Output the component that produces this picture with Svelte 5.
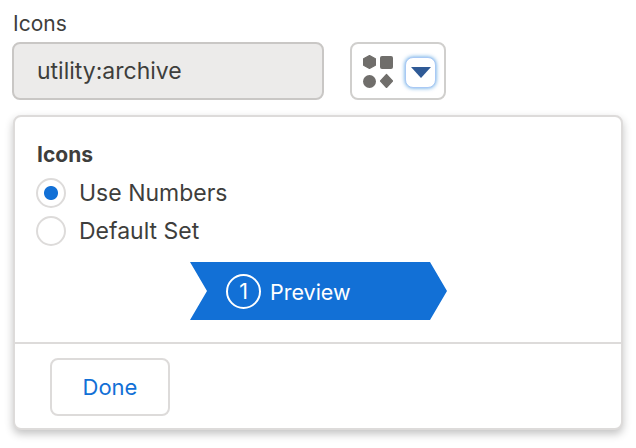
<script>
    let iconSet = "numbers";
</script>

<div class="page">
    <div class="label">Icons</div>
    <div class="row">
        <div class="input">utility:archive</div>
        <div class="picker">
            <svg width="30" height="33" viewBox="0 0 30 33">
                <path d="M6.5 0.6 L12.4 3.8 V10.2 L6.5 13.4 L0.6 10.2 V3.8 Z" fill="#706e6b" stroke="#706e6b" stroke-width="1.2" stroke-linejoin="round" />
                <rect x="17" y="1" width="13" height="13" rx="2" fill="#706e6b" />
                <circle cx="6.5" cy="26.5" r="6.5" fill="#706e6b" />
                <path d="M23.5 19.5 L29.5 26 L23.5 32.5 L17.5 26 Z" fill="#706e6b" stroke="#706e6b" stroke-width="1.2" stroke-linejoin="round" />
            </svg>
            <div class="drop">
                <svg width="20" height="11" viewBox="0 0 20 11"><path d="M0 0 H20 L10 11 Z" fill="#2f5a96" /></svg>
            </div>
        </div>
    </div>

    <div class="popover">
        <div class="body">
            <div class="title">Icons</div>
            <label class="radio">
                <input type="radio" bind:group={iconSet} value="numbers" />
                <span class="dot"></span>
                <span>Use Numbers</span>
            </label>
            <label class="radio">
                <input type="radio" bind:group={iconSet} value="default" />
                <span class="dot"></span>
                <span>Default Set</span>
            </label>
            <div class="chevron">
                <span class="num">1</span>
                <span class="step">Preview</span>
            </div>
        </div>
        <div class="foot">
            <button class="done">Done</button>
        </div>
    </div>
</div>

<style>
    :global(body) {
        background: #fff;
    }
    .page {
        width: 636px;
        height: 448px;
        box-sizing: border-box;
        padding: 12px 13px 0 12px;
        overflow: hidden;
        font-family: Inter, "Noto Sans", sans-serif;
        color: #3e3e3c;
    }
    .label {
        font-size: 21px;
        line-height: 24px;
        margin-left: 1px;
        margin-bottom: 6px;
    }
    .row {
        display: flex;
        gap: 26px;
        height: 58px;
    }
    .input {
        width: 312px;
        box-sizing: border-box;
        display: flex;
        align-items: center;
        padding-left: 23px;
        font-size: 23px;
        background: #ecebea;
        border: 2px solid #c9c7c5;
        border-radius: 8px;
    }
    .picker {
        width: 96px;
        box-sizing: border-box;
        display: flex;
        align-items: center;
        padding-left: 11px;
        gap: 12px;
        border: 2px solid #d0cfcd;
        border-radius: 8px;
    }
    .drop {
        width: 31px;
        height: 31px;
        margin-top: 3px;
        box-sizing: border-box;
        display: flex;
        align-items: center;
        justify-content: center;
        background: #fff;
        border: 1px solid #a9c9f5;
        border-radius: 8px;
        box-shadow: 0 0 4px #0070d2aa;
    }
    .popover {
        margin: 15px 0 0 1px;
        width: 610px;
        height: 315px;
        box-sizing: border-box;
        display: flex;
        flex-direction: column;
        background: #fff;
        border: 2px solid #dddbda;
        border-radius: 8px;
        box-shadow: 0 4px 8px rgba(0, 0, 0, 0.24);
    }
    .body {
        flex: 1;
        padding: 24px 21px 0;
    }
    .title {
        font-size: 21px;
        font-weight: 700;
        line-height: 28px;
        margin: 0 0 5px 1px;
    }
    .radio {
        display: flex;
        align-items: center;
        gap: 13px;
        height: 38px;
        font-size: 23px;
    }
    .radio input {
        display: none;
    }
    .dot {
        width: 30px;
        height: 30px;
        box-sizing: border-box;
        border: 2px solid #dddbda;
        border-radius: 50%;
        background: #fff;
    }
    .radio input:checked + .dot {
        background: radial-gradient(circle, #1270d6 6.5px, #fff 7.5px);
    }
    .chevron {
        margin: 12px 0 0 154px;
        width: 257px;
        height: 58px;
        box-sizing: border-box;
        display: flex;
        align-items: center;
        gap: 9px;
        padding-left: 36px;
        font-size: 21.5px;
        color: #fff;
        background: #1270d6;
        clip-path: polygon(0 0, 240px 0, 100% 50%, 240px 100%, 0 100%, 17px 50%);
    }
    .step {
        padding-top: 1px;
    }
    .num {
        width: 35px;
        height: 35px;
        box-sizing: border-box;
        display: flex;
        align-items: center;
        justify-content: center;
        border: 2px solid #fff;
        border-radius: 50%;
    }
    .foot {
        height: 86px;
        box-sizing: border-box;
        border-top: 2px solid #dddbda;
        padding: 14px 0 0 35px;
    }
    .done {
        width: 120px;
        height: 58px;
        font-family: inherit;
        font-size: 22px;
        color: #1270d6;
        background: #fff;
        border: 2px solid #dddbda;
        border-radius: 8px;
    }
</style>
